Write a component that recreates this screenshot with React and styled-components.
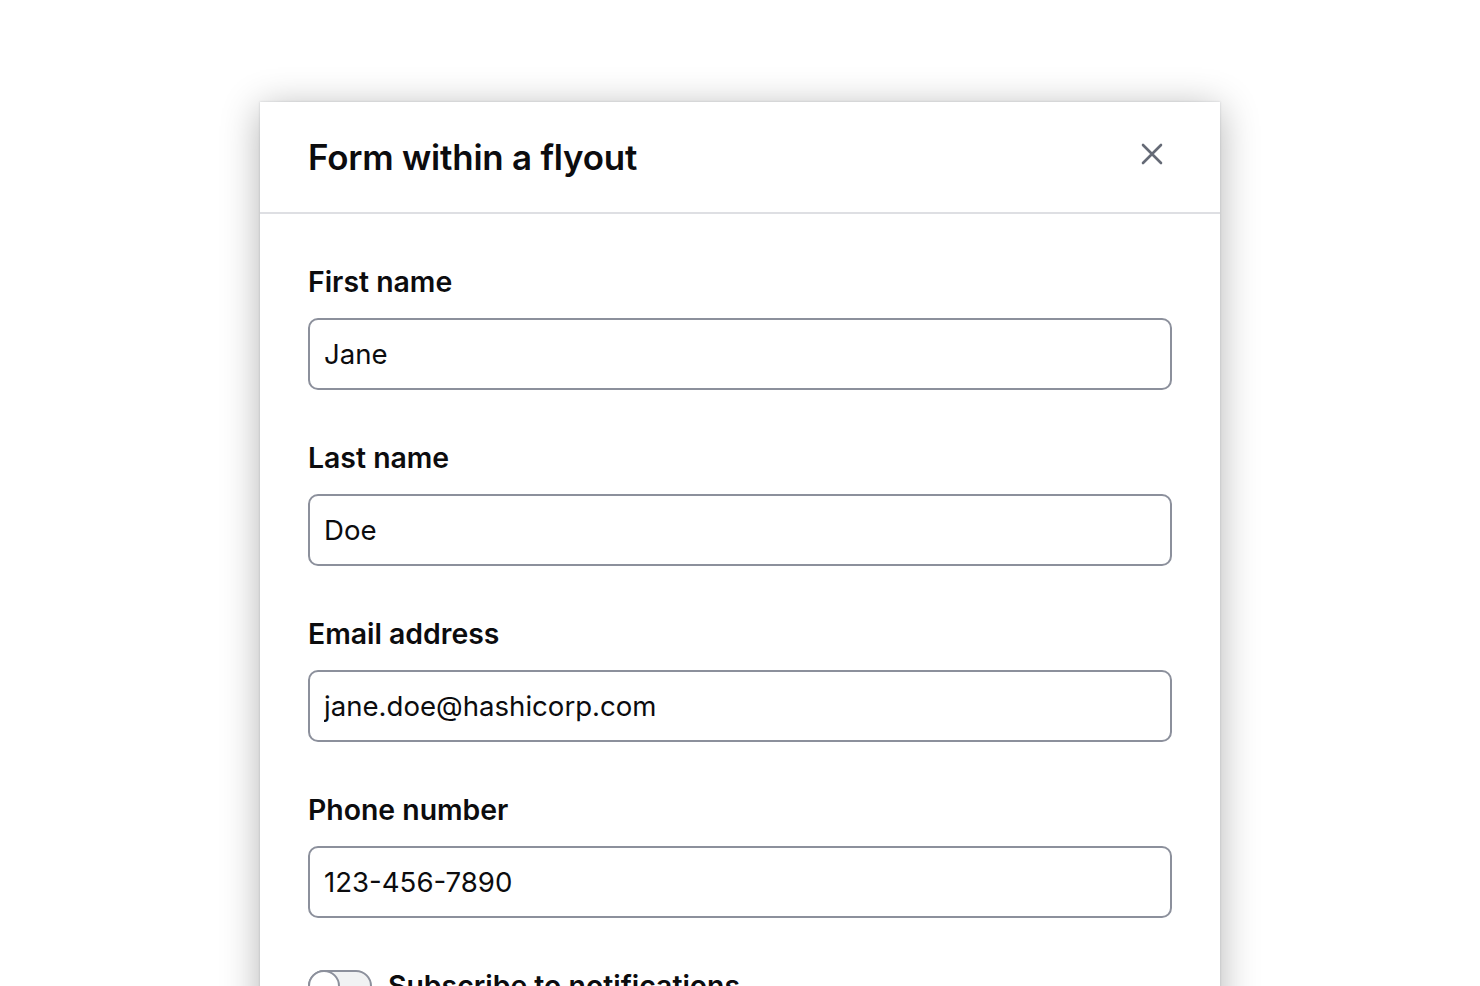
import React, { useState } from 'react';
import styled, { createGlobalStyle } from 'styled-components';

const GlobalStyle = createGlobalStyle`
  html, body {
    margin: 0;
    padding: 0;
    background: #ffffff;
    height: 986px;
    overflow: hidden;
  }
  body {
    font-family: Inter, "Noto Sans", "Liberation Sans", sans-serif;
    color: #0c0c0e;
  }
`;

const Page = styled.div`
  padding: 102px 0 0 260px;
`;

const Flyout = styled.section`
  width: 960px;
  min-height: 1000px;
  background: #ffffff;
  box-shadow: 0 0 2px rgba(101, 106, 118, 0.3), 0 6px 36px rgba(0, 0, 0, 0.3);
`;

const Header = styled.header`
  display: flex;
  align-items: center;
  justify-content: space-between;
  height: 110px;
  padding: 0 48px;
  border-bottom: 2px solid #dedfe3;
`;

const Title = styled.h1`
  margin: 0;
  font-size: 34.9px;
  line-height: 52px;
  font-weight: 600;
  letter-spacing: -0.2px;
  color: #0c0c0e;
`;

const CloseButton = styled.button`
  display: flex;
  align-items: center;
  justify-content: center;
  width: 48px;
  height: 48px;
  margin-right: -4px;
  margin-top: -6px;
  padding: 0;
  border: none;
  background: transparent;
  color: #656a76;
  cursor: pointer;
`;

const Body = styled.div`
  display: flex;
  flex-direction: column;
  gap: 48px;
  padding: 48px;
`;

const Field = styled.div`
  display: flex;
  flex-direction: column;
  gap: 16px;
`;

const Label = styled.label`
  font-size: 28.4px;
  line-height: 40px;
  font-weight: 600;
  color: #0c0c0e;
`;

const Input = styled.input`
  box-sizing: border-box;
  width: 100%;
  height: 72px;
  padding: 0 14px;
  border: 2px solid #8c909c;
  border-radius: 10px;
  font-family: inherit;
  font-size: 27.6px;
  color: #0c0c0e;
  background: #ffffff;
  outline: none;
`;

const ToggleRow = styled.div`
  display: flex;
  align-items: center;
  gap: 16px;
`;

const Track = styled.span`
  position: relative;
  box-sizing: border-box;
  width: 64px;
  height: 32px;
  border: 2px solid #8c909c;
  border-radius: 16px;
  background: #f1f2f3;
  flex-shrink: 0;
`;

const Knob = styled.span`
  position: absolute;
  top: -2px;
  left: ${p => (p.$on ? '30px' : '-2px')};
  box-sizing: border-box;
  width: 32px;
  height: 32px;
  border: 2px solid #8c909c;
  border-radius: 50%;
  background: #ffffff;
`;

const fields = [
  { id: 'first', label: 'First name', value: 'Jane' },
  { id: 'last', label: 'Last name', value: 'Doe' },
  { id: 'email', label: 'Email address', value: 'jane.doe@hashicorp.com' },
  { id: 'phone', label: 'Phone number', value: '123-456-7890' },
];

const App = () => {
  const [values, setValues] = useState(
    Object.fromEntries(fields.map(f => [f.id, f.value]))
  );

  return (
    <>
      <GlobalStyle />
      <Page>
        <Flyout>
          <Header>
            <Title>Form within a flyout</Title>
            <CloseButton aria-label="Dismiss">
              <svg width="24" height="24" viewBox="0 0 24 24" fill="none">
                <path d="M3 3l18 18M21 3L3 21" stroke="currentColor" strokeWidth="2.6" strokeLinecap="round" />
              </svg>
            </CloseButton>
          </Header>
          <Body>
            {fields.map(f => (
              <Field key={f.id}>
                <Label htmlFor={f.id}>{f.label}</Label>
                <Input
                  id={f.id}
                  value={values[f.id]}
                  onChange={e => setValues({ ...values, [f.id]: e.target.value })}
                />
              </Field>
            ))}
            <ToggleRow>
              <Track>
                <Knob />
              </Track>
              <Label>Subscribe to notifications</Label>
            </ToggleRow>
          </Body>
        </Flyout>
      </Page>
    </>
  );
};

export default App;
